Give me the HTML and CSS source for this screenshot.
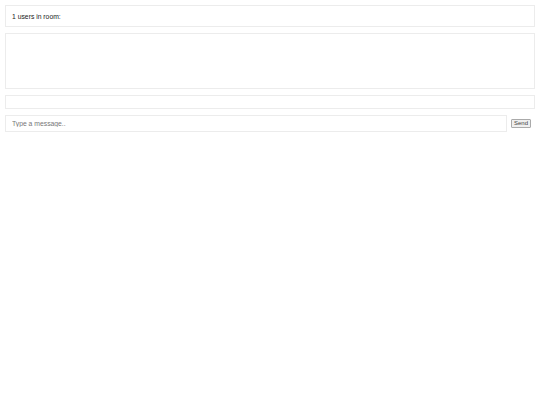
FILE: index.html
```html
<!DOCTYPE html>
<html>
<head>
<meta charset="utf-8">
<link rel="stylesheet" href="styles.css">
</head>
<body>
<div class="app">
  <div class="panel users">1 users in room:</div>
  <div class="panel messages"></div>
  <div class="panel typing"></div>
  <form class="composer">
    <input class="input" type="text" placeholder="Type a message..">
    <button class="send" type="button">Send</button>
  </form>
</div>
</body>
</html>
```
FILE: styles.css
```css
html, body {
  margin: 0;
  padding: 0;
  background: #fff;
}
body {
  font-family: "Liberation Sans", Arial, sans-serif;
  font-size: 6.8px;
  color: #222;
}
.app {
  padding: 5px 5px 0 5px;
  display: flex;
  flex-direction: column;
  gap: 6px;
}
.panel {
  border: 1px solid #ececec;
  box-sizing: border-box;
}
.users {
  height: 22px;
  padding: 0 6px;
  display: flex;
  align-items: center;
}
.messages {
  height: 56px;
}
.typing {
  height: 14px;
}
.composer {
  margin: 0;
  display: flex;
  align-items: center;
  gap: 4px;
}
.input {
  flex: 1;
  height: 17px;
  box-sizing: border-box;
  border: 1px solid #ececec;
  padding: 0 6px;
  font-family: "Liberation Sans", Arial, sans-serif;
  font-size: 6.8px;
  outline: none;
  margin: 0;
}
.input::placeholder {
  color: #777;
}
.send {
  font-family: "Liberation Sans", Arial, sans-serif;
  font-size: 6px;
  padding: 0 2px;
  height: 9px;
  line-height: 7px;
  border: 1px solid #aaa;
  background: #efefef;
  color: #444;
  margin-right: 4px;
  border-radius: 1px;
}
```
